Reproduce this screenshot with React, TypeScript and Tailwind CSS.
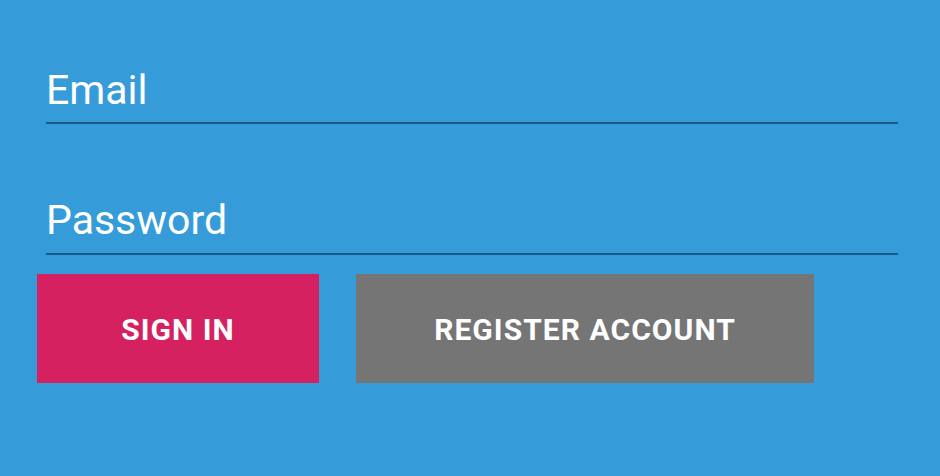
export default function App() {
  return (
    <div
      className="w-[940px] h-[476px] bg-[#369cd9] pt-[66px] pl-[37px] pr-[42px] overflow-hidden"
      style={{ fontFamily: 'Roboto, "Noto Sans", sans-serif' }}
    >
      <div className="ml-[9px] border-b-2 border-[#1d5a80] pb-[8px]">
        <div className="text-[41px] leading-[48px] text-white">Email</div>
      </div>
      <div className="ml-[9px] mt-[72px] border-b-2 border-[#1d5a80] pb-[9px]">
        <div className="text-[41px] leading-[48px] text-white">Password</div>
      </div>
      <div className="mt-[19px] flex gap-[37px]">
        <button className="w-[282px] h-[109px] pt-[2px] bg-[#d52160] text-white text-[30px] font-bold tracking-[0.035em]">
          SIGN IN
        </button>
        <button className="w-[458px] h-[109px] pt-[2px] bg-[#757575] text-white text-[30px] font-bold tracking-[0.035em]">
          REGISTER ACCOUNT
        </button>
      </div>
    </div>
  );
}
